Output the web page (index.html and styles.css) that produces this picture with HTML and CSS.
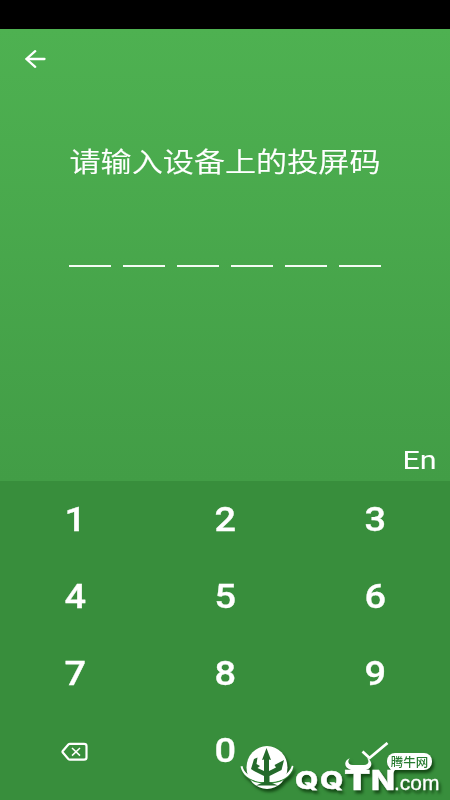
FILE: index.html
```html
<!DOCTYPE html>
<html lang="zh-CN">
<head>
<meta charset="utf-8">
<title>投屏码</title>
<link rel="stylesheet" href="styles.css">
</head>
<body>
<div class="app">
  <div class="status"></div>
  <main class="main">
    <svg class="back" width="22" height="20" viewBox="0 0 22 20"><path d="M10.200 2.200 1.400 10 10.200 17.800M1.400 10H19.500"/></svg>
    <h1 class="title"><span>请输入设备上的投屏码</span></h1>
    <div class="code"><i></i><i></i><i></i><i></i><i></i><i></i></div>
    <div class="lang"><span>En</span></div>
  </main>
  <div class="keypad">
    <div class="key"><span>1</span></div><div class="key"><span>2</span></div><div class="key"><span>3</span></div>
    <div class="key"><span>4</span></div><div class="key"><span>5</span></div><div class="key"><span>6</span></div>
    <div class="key"><span>7</span></div><div class="key"><span>8</span></div><div class="key"><span>9</span></div>
    <div class="key"><svg class="del" width="28" height="20" viewBox="0 0 28 20"><path class="outline" d="M9 1.800H23Q25.500 1.800 25.500 4V15.500Q25.500 17.700 23 17.700H9Q8 17.700 7.300 17L1.800 10.500Q1.200 9.750 1.800 9L7.300 2.500Q8 1.800 9 1.800Z"/><path class="cross" d="M11 6 19 13.600M19 6 11 13.600"/></svg></div>
    <div class="key"><span>0</span></div>
    <div class="key"><svg class="check" width="28" height="20" viewBox="0 0 28 20"><path d="M1.500 9.500 8.500 16 26.500 1"/></svg></div>
  </div>
  <div class="watermark">
    <svg class="emblem" width="56" height="58" viewBox="0 0 56 58">
      <ellipse cx="28" cy="25.500" rx="20.500" ry="21.500" fill="#fff"/>
      <path d="M2.500 27C7 38 17 41 28 41S49 38 53.500 27" fill="none" stroke="#388e3c" stroke-width="1.400"/>
      <path d="M1.500 24.500 3.500 24C5 33 15 37 28 37S50 33 53 23.500L54.500 24.500C52 35 43 40 28 40S4 35 1.500 24.500Z" fill="#fff"/>
      <path d="M27.500 6 32 18 30 17.500V29L37 25.500 35.500 23 45 18 42.500 28 30.500 34V40L39 43.500H17L25 40V34L15 29 12 27 15 17 18.500 15.500 17.500 22 21 24 18.500 26 25 29V17.500L23 18Z" fill="#246a2b"/>
    </svg>
    <svg class="horns" width="27" height="15" viewBox="0 0 27 15"><path d="M5 0C-2 3-1 10 6 12L11 13V15H16V13L21 12C28 10 28 3 22 0 25 4 23 7 19 7H8C3 7 2 3 5 0Z"/></svg>
    <div class="brand"><span class="q">Q</span><span class="q">Q</span><span class="t">T</span><span class="n">N</span></div>
    <div class="domain"><span>.com</span></div>
    <div class="bubble">腾牛网</div>
  </div>
</div>
</body>
</html>
```
FILE: styles.css
```css
* { box-sizing: border-box; }
body { margin: 0; }
.app {
  position: relative;
  width: 450px;
  height: 800px;
  overflow: hidden;
  display: flex;
  flex-direction: column;
  color: #fff;
  font-family: Roboto, "Noto Sans CJK SC", sans-serif;
}
.status { height: 29px; background: #000; }
.main {
  height: 452px;
  background: linear-gradient(#4eb151, #429d46);
  display: flex;
  flex-direction: column;
}
svg { display: block; flex: none; }
.back { margin: 20px 0 0 25px; fill: none; stroke: #fff; stroke-width: 2.3; stroke-linecap: round; }
.title {
  margin: 72px 0 0;
  height: 40px;
  line-height: 40px;
  font-family: "Noto Sans CJK SC", sans-serif;
  font-size: 27px;
  font-weight: 350;
  text-align: center;
  white-space: nowrap;
}
.title span { display: inline-block; transform: scaleX(1.152); -webkit-text-stroke: .2px #fff; }
.code { margin: 84px 0 0 68.5px; display: flex; gap: 12.2px; }
.code i { width: 42px; height: 2px; background: #f4fbf4; }
.lang { margin: auto 13px 6px 0; height: 30px; line-height: 30px; font-size: 26.5px; text-align: right; }
.lang span { display: inline-block; transform: scaleX(1.15); transform-origin: right; }
.keypad {
  height: 319px;
  background: #388e3c;
  display: grid;
  grid-template-columns: repeat(3, 150px);
  grid-auto-rows: 77px;
}
.key { display: flex; align-items: center; justify-content: center; font-size: 33px; font-weight: 500; }
.key span { transform: scaleX(1.15); -webkit-text-stroke: .3px #fff; }
.del { margin-top: 3px; fill: none; stroke: #fff; }
.outline { stroke-width: 2.2; }
.cross { stroke-width: 1.5; }
.check { margin-top: 2px; fill: none; stroke: #fff; stroke-width: 2.8; }
.watermark { position: absolute; left: 239px; top: 742px; width: 211px; height: 58px; filter: drop-shadow(2px 3px 1.5px rgba(0, 35, 0, .65)); }
.emblem { position: absolute; left: 0; top: 0; }
.horns { position: absolute; left: 106px; top: 16px; fill: #fff; }
.brand {
  position: absolute;
  left: 56px;
  top: 25px;
  display: grid;
  grid-template-columns: 25px 24px 27px 26px;
  font: 800 27px/28px Inter, sans-serif;
}
.brand span { display: block; width: max-content; transform-origin: left; -webkit-text-stroke: .4px #fff; }
.brand .q { font-size: 24px; line-height: 28px; transform: scaleX(1.25); }
.brand .t { transform: scaleX(1.45); }
.brand .n { transform: scaleX(1.16); }
.domain { position: absolute; left: 155px; top: 29px; font: 400 21px/24px "Liberation Sans", sans-serif; }
.domain span { display: inline-block; -webkit-text-stroke: .3px #fff; }
.bubble {
  position: absolute;
  left: 148px;
  top: 11px;
  width: 45px;
  height: 17px;
  border-radius: 8px;
  background: #fff;
  color: #287c31;
  font: 500 12.5px/17px "Noto Sans CJK SC", sans-serif;
  text-align: center;
  white-space: nowrap;
}
.bubble::after {
  content: "";
  position: absolute;
  left: 2px;
  top: 14px;
  border: 4px solid transparent;
  border-top: 6px solid #fff;
}
```
